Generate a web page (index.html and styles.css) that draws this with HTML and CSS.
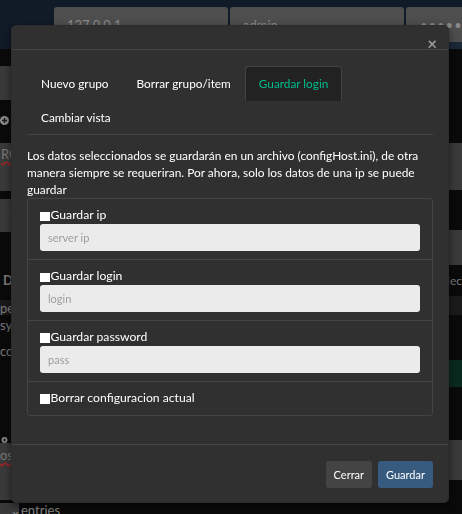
FILE: index.html
```html
<!DOCTYPE html>
<html lang="es">
<head>
<meta charset="utf-8">
<title>Guardar login</title>
<link rel="stylesheet" href="styles.css">
</head>
<body>
<div class="page">
  <header class="navbar">
    <div class="nav-input nav-ip">127.0.0.1</div>
    <div class="nav-input nav-user">admin</div>
    <div class="nav-input nav-pass">••••••••</div>
  </header>
  <main class="content">
    <div class="col">
      <div class="band l1"></div>
      <div class="band grey l2"></div>
      <div class="band l3"><svg class="plus" width="9" height="9" viewBox="0 0 9 9"><circle cx="4.5" cy="4.5" r="4.5" fill="#8a8a8a"/><path d="M4.5 2v5M2 4.5h5" stroke="#1a1a1a" stroke-width="1.4"/></svg></div>
      <div class="band grey l4"><span class="spell">ROOT</span></div>
      <div class="band l5"></div>
      <div class="band grey l6"><span class="chev">⌄</span></div>
      <div class="band l7"><span class="bold">Datos</span></div>
      <div class="band dim l8"><span class="txt">pe</span></div>
      <div class="band l9">
        <span class="txt">sys</span>
        <span class="txt co">co</span>
        <svg class="plus plus-low" width="9" height="9" viewBox="0 0 9 9"><circle cx="4.5" cy="4.5" r="4.5" fill="#8a8a8a"/><path d="M4.5 2v5M2 4.5h5" stroke="#1a1a1a" stroke-width="1.4"/></svg>
      </div>
      <div class="band grey l10"><span class="spell">ost</span></div>
      <div class="band l11"></div>
    </div>
    <div class="col">
      <div class="band r1"></div>
      <div class="band grey r2"></div>
      <div class="band r3"></div>
      <div class="band grey r4"></div>
      <div class="band r5"><span class="txt sel">Selec</span></div>
      <div class="band dim r6"></div>
      <div class="band r7"></div>
      <div class="band green r8"></div>
      <div class="band r9"></div>
      <div class="band grey r10"></div>
      <div class="band r11"></div>
    </div>
  </main>
  <div class="entries-row"><span class="entries-chev">⌄</span><span class="entries">entries</span></div>
</div>

<div class="modal" role="dialog">
  <div class="modal-header"><button class="close" type="button">×</button></div>
  <div class="modal-body">
    <ul class="tabs">
      <li class="tab"><a class="tab-link">Nuevo grupo</a></li>
      <li class="tab"><a class="tab-link">Borrar grupo/item</a></li>
      <li class="tab active"><a class="tab-link">Guardar login</a></li>
      <li class="tab"><a class="tab-link">Cambiar vista</a></li>
    </ul>
    <div class="tab-pane">
      <p class="info">Los datos seleccionados se guardarán en un archivo (configHost.ini), de otra manera siempre se requeriran. Por ahora, solo los datos de una ip se puede guardar</p>
      <ul class="list">
        <li class="item">
          <label class="check"><input type="checkbox" class="box">Guardar ip</label>
          <input class="field" type="text" placeholder="server ip">
        </li>
        <li class="item">
          <label class="check"><input type="checkbox" class="box">Guardar login</label>
          <input class="field" type="text" placeholder="login">
        </li>
        <li class="item">
          <label class="check"><input type="checkbox" class="box">Guardar password</label>
          <input class="field" type="text" placeholder="pass">
        </li>
        <li class="item">
          <label class="check"><input type="checkbox" class="box">Borrar configuracion actual</label>
        </li>
      </ul>
    </div>
  </div>
  <div class="modal-footer">
    <button class="btn btn-secondary" type="button">Cerrar</button>
    <button class="btn btn-primary" type="button">Guardar</button>
  </div>
</div>
</body>
</html>
```

FILE: styles.css
```css
* { box-sizing: border-box; margin: 0; padding: 0; }

body {
  background: #0a0a0a;
  font-family: Lato, "Noto Sans", sans-serif;
  font-size: 11.9px;
  line-height: 1.4;
  color: #fff;
  overflow: hidden;
}

.page { height: 514px; overflow: hidden; }

/* background navbar */
.navbar {
  height: 49px;
  background: #111b27;
  display: flex;
  gap: 2px;
  padding: 7px 0 0 54px;
}
.nav-input {
  background: #4e4e4e;
  border-radius: 3px 3px 0 0;
  height: 35px;
  padding: 9px 13px 0;
  font-size: 13px;
  color: #8a8a8a;
  white-space: nowrap;
  overflow: hidden;
}
.nav-ip, .nav-user { width: 174px; }
.nav-pass {
  flex: 1;
  height: 42px;
  border-radius: 3px 0 0 0;
  border-bottom: 7px solid #1a2838;
  padding-left: 14px;
  letter-spacing: 1px;
}

/* background content */
.content {
  display: grid;
  grid-template-columns: 1fr 1fr;
  height: 458px;
}
.col { display: flex; flex-direction: column; }
.band { background: #0a0a0a; flex: none; font-size: 13px; color: #7a7a7a; line-height: 15px; white-space: nowrap; }
.grey { background: #3a3a3a; }
.dim { background: #1a1a1a; }
.green { background: #092a1e; }

.l1 { height: 17px; }
.l2 { height: 34px; }
.l3 { height: 43px; padding-top: 16px; }
.l4 { height: 48px; padding: 4px 0 0 1px; }
.l5 { height: 8px; }
.l6 { height: 33px; padding: 6px 0 0 8px; }
.l7 { height: 68px; padding: 41px 0 0 3px; }
.l8 { height: 15px; padding-top: 1px; }
.l9 { height: 128px; padding-top: 3px; display: flex; flex-direction: column; }
.l10 { height: 57px; padding-top: 5px; }
.l11 { height: 7px; }

.r1 { height: 94px; }
.r2 { height: 47px; }
.r3 { height: 40px; }
.r4 { height: 35px; }
.r5 { height: 31px; padding: 8px 0 0 212px; font-size: 12px; }
.r6 { height: 19px; }
.r7 { height: 45px; }
.r8 { height: 27px; }
.r9 { height: 53px; }
.r10 { height: 40px; }
.r11 { height: 27px; }

.plus { display: block; }
.plus-low { margin-top: 78px; }
.co { margin-top: 11px; }
.spell { text-decoration: underline wavy #b02020; text-underline-offset: 2px; }
.bold { font-weight: bold; }
.chev { color: #8a8a8a; }

.entries-row {
  display: flex;
  height: 10px;
  background: #0a0a0a;
  font-size: 13px;
  line-height: 14px;
  color: #8a8a8a;
}
.entries-chev { width: 19px; background: #3a3a3a; padding-left: 10px; margin-top: -4px; height: 14px; }
.entries { padding-left: 2px; margin-top: -4px; }

/* modal */
.modal {
  position: fixed;
  top: 25px;
  left: 11px;
  width: 438px;
  background: #303030;
  border: 1px solid #2d2d2d;
  border-radius: 5px;
  box-shadow: 0 3px 9px rgba(0, 0, 0, 0.5);
}
.modal-header {
  height: 24px;
  border-bottom: 1px solid #444;
  display: flex;
  justify-content: flex-end;
  align-items: flex-end;
  padding: 0 11px 0 15px;
}
.close {
  background: none;
  border: 0;
  color: #999;
  font-family: Lato, sans-serif;
  font-size: 17px;
  font-weight: bold;
  line-height: 17px;
  margin-bottom: -3px;
  cursor: pointer;
}
.modal-body { padding: 16px 15px 12.5px; }

.tabs {
  list-style: none;
  display: flex;
  flex-wrap: wrap;
  border-bottom: 1px solid #444;
}
.tab { margin-bottom: -1px; margin-right: 0; }
.tab-link {
  display: block;
  padding: 8px 13px;
  font-size: 11.8px;
  line-height: 17px;
  border: 1px solid transparent;
  border-radius: 4px 4px 0 0;
  color: #fff;
}
.tab.active .tab-link {
  background: #222;
  border-color: #444 #444 transparent;
  color: #00bc8c;
}

.tab-pane { padding-top: 13px; }
.info { line-height: 16.8px; }

.list {
  list-style: none;
  margin-bottom: 16px;
  border: 1px solid #444;
  border-radius: 3px;
}
.item { padding: 8px 12px; }
.item + .item { border-top: 1px solid #444; }

.check { display: block; line-height: 16.8px; font-size: 12.2px; }
.box {
  appearance: none;
  -webkit-appearance: none;
  display: inline-block;
  width: 9.5px;
  height: 9.5px;
  background: #fff;
  margin: 0 1px 0 0;
  vertical-align: -2px;
  border: 0;
}
.field {
  display: block;
  width: 100%;
  height: 27px;
  background: #ebebeb;
  border: 0;
  border-radius: 3px;
  padding: 0 8px;
  font-family: Lato, sans-serif;
  font-size: 11px;
  color: #222;
}
.field::placeholder { color: #9d9d9d; }

.modal-footer {
  border-top: 1px solid #444;
  padding: 16px 15px 14px;
  display: flex;
  justify-content: flex-end;
  gap: 6px;
}
.btn {
  height: 27px;
  padding: 0 8px;
  border: 0;
  border-radius: 3px;
  font-family: Lato, sans-serif;
  font-size: 11px;
  color: #fff;
  cursor: pointer;
}
.btn-secondary { background: #444; }
.btn-primary { background: #375a7f; }
```
